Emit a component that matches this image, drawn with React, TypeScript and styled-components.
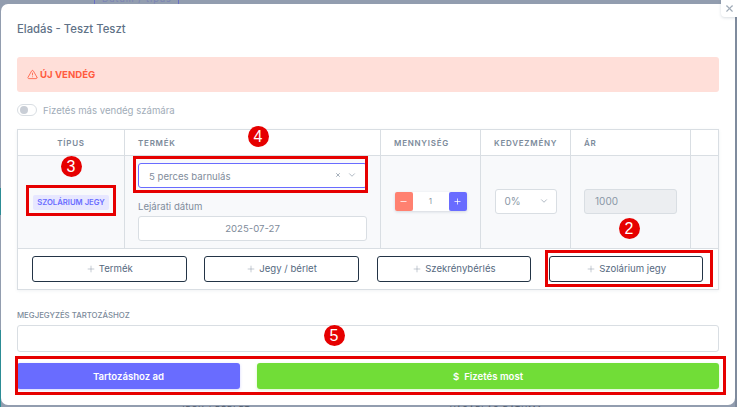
import React from "react";
import styled, { createGlobalStyle } from "styled-components";
import { ChevronDown, Minus, Plus, TriangleAlert, X } from "lucide-react";

const GlobalStyle = createGlobalStyle`
    html, body {
        margin: 0;
        padding: 0;
        height: 407px;
        overflow: hidden;
        background: #929daf;
        font-family: Inter, "Noto Sans", sans-serif;
    }
`;

const App = () => {
    return (
        <>
            <GlobalStyle/>
            <Page>
                {/* what is left visible of the page behind the dialog */}
                <BehindLine $x={94}/>
                <BehindLine $x={178}/>
                <BehindTop>Dátum / típus</BehindTop>
                <BehindTeal $y={188} $h={27}/>
                <BehindTeal $y={330} $h={77}/>
                <BehindBottom $x={180}>JEGY / BÉRLET</BehindBottom>
                <BehindBottom $x={450}>VÁSÁRLÁS DÁTUMA</BehindBottom>
                <BehindEdge/>

                <Modal>
                    <CloseBtn><X size={11} strokeWidth={2.5}/></CloseBtn>
                    <Title>Eladás - Teszt Teszt</Title>

                    <Alert>
                        <TriangleAlert size={11} strokeWidth={1.8}/>
                        ÚJ VENDÉG
                    </Alert>

                    <ToggleRow>
                        <Toggle><Knob/></Toggle>
                        Fizetés más vendég számára
                    </ToggleRow>

                    <Table>
                        <Grid>
                            <HeadCell $center>TÍPUS</HeadCell>
                            <HeadCell>TERMÉK</HeadCell>
                            <HeadCell>MENNYISÉG</HeadCell>
                            <HeadCell>KEDVEZMÉNY</HeadCell>
                            <HeadCell>ÁR</HeadCell>
                            <HeadCell/>

                            <BodyCell>
                                <Marked>
                                    <Chip>SZOLÁRIUM JEGY</Chip>
                                </Marked>
                            </BodyCell>
                            <ProductCell>
                                <SelectBox>
                                    5 perces barnulás
                                    <SelectIcons>
                                        <X size={6} strokeWidth={3}/>
                                        <ChevronDown size={10} strokeWidth={1.6}/>
                                    </SelectIcons>
                                </SelectBox>
                                <FieldLabel>Lejárati dátum</FieldLabel>
                                <DateBox>2025-07-27</DateBox>
                            </ProductCell>
                            <BodyCell>
                                <Stepper>
                                    <StepBtn $color="#ff8170"><Minus size={9} strokeWidth={2.5}/></StepBtn>
                                    <StepValue>1</StepValue>
                                    <StepBtn $color="#696cff"><Plus size={9} strokeWidth={2.5}/></StepBtn>
                                </Stepper>
                            </BodyCell>
                            <BodyCell>
                                <Percent>
                                    0%
                                    <ChevronDown size={10} strokeWidth={1.6}/>
                                </Percent>
                            </BodyCell>
                            <BodyCell>
                                <PriceBox>1000</PriceBox>
                            </BodyCell>
                            <BodyCell/>
                        </Grid>

                        <AddRow>
                            <AddBtn><Plus size={10} strokeWidth={1.2}/>Termék</AddBtn>
                            <AddBtn><Plus size={10} strokeWidth={1.2}/>Jegy / bérlet</AddBtn>
                            <AddBtn><Plus size={10} strokeWidth={1.2}/>Szekrénybérlés</AddBtn>
                            <AddBtn><Plus size={10} strokeWidth={1.2}/>Szolárium jegy</AddBtn>
                        </AddRow>
                    </Table>

                    <NoteLabel>MEGJEGYZÉS TARTOZÁSHOZ</NoteLabel>
                    <NoteInput/>

                    <Actions>
                        <DebtBtn>Tartozáshoz ad</DebtBtn>
                        <PayBtn><span>$</span>Fizetés most</PayBtn>
                    </Actions>

                    <RedFrame $x={26} $y={185} $w={90} $h={31}/>
                    <RedFrame $x={133} $y={156} $w={235} $h={37}/>
                    <RedFrame $x={545} $y={250} $w={168} $h={37}/>
                    <RedFrame $x={15} $y={356} $w={711} $h={39}/>

                    <Badge $x={71} $y={166}>3</Badge>
                    <Badge $x={258} $y={136}>4</Badge>
                    <Badge $x={629} $y={228}>2</Badge>
                    <Badge $x={334} $y={335}>5</Badge>
                </Modal>
            </Page>
        </>
    );
};

const Page = styled.main`
    width: 737px;
    height: 407px;
    padding: 4px 2px 2px 1px;
    box-sizing: border-box;
    position: relative;
    overflow: hidden;
`;

const BehindLine = styled.div<{ $x: number }>`
    position: absolute;
    left: ${p => p.$x}px;
    top: 0;
    width: 1px;
    height: 4px;
    background: #6a6fc4;
`;

const BehindTop = styled.div`
    position: absolute;
    left: 102px;
    top: -7px;
    font-size: 9px;
    line-height: 11px;
    letter-spacing: 1px;
    color: #7c84b4;
`;

const BehindTeal = styled.div<{ $y: number; $h: number }>`
    position: absolute;
    left: 0;
    top: ${p => p.$y}px;
    width: 1px;
    height: ${p => p.$h}px;
    background: #2c8c95;
`;

const BehindBottom = styled.div<{ $x: number }>`
    position: absolute;
    left: ${p => p.$x}px;
    top: 404px;
    font-size: 8px;
    line-height: 10px;
    letter-spacing: 1px;
    color: #4e5a6c;
`;

const BehindEdge = styled.div`
    position: absolute;
    right: 0;
    top: 17px;
    width: 2px;
    height: 390px;
    background: #7f8b9d;
`;

const Modal = styled.section`
    position: relative;
    z-index: 1;
    width: 734px;
    height: 401px;
    background: #fff;
    border-radius: 7px;
    padding: 17px 16px 0 16px;
    box-sizing: border-box;
    color: #697a8d;
    font-size: 10px;
`;

const CloseBtn = styled.button`
    position: absolute;
    top: -4px;
    right: -2px;
    width: 16px;
    height: 17px;
    padding: 0;
    border: 0;
    border-radius: 0 0 0 4px;
    background: #fff;
    color: #a1acb8;
    display: flex;
    align-items: center;
    justify-content: center;
    box-shadow: 0 1px 3px rgba(67, 89, 113, 0.2);
`;

const Title = styled.h5`
    margin: 0;
    height: 16px;
    font-size: 11.3px;
    line-height: 16px;
    font-weight: 500;
    color: #5f7287;
`;

const Alert = styled.div`
    margin-top: 20px;
    height: 35px;
    width: 702px;
    border-radius: 3px;
    background: #ffdfd9;
    color: #ff5b3f;
    display: flex;
    align-items: center;
    gap: 2px;
    padding-left: 10px;
    box-sizing: border-box;
    font-size: 9.6px;
    font-weight: 700;
`;

const ToggleRow = styled.label`
    margin-top: 12px;
    height: 12px;
    display: flex;
    align-items: center;
    gap: 6px;
    font-size: 9.6px;
    color: #a1acb8;
`;

const Toggle = styled.span`
    width: 20px;
    height: 12px;
    box-sizing: border-box;
    border: 1px solid #d9dee3;
    border-radius: 6px;
    background: #fff;
    display: flex;
    align-items: center;
    padding-left: 2px;
`;

const Knob = styled.span`
    width: 8px;
    height: 8px;
    border-radius: 50%;
    background: #c9ced6;
`;

const Table = styled.div`
    margin-top: 13px;
    width: 702px;
    border: 1px solid #d9dee3;
    box-sizing: border-box;
    box-shadow: 0 1px 3px rgba(67, 89, 113, 0.08);
`;

const Grid = styled.div`
    display: grid;
    grid-template-columns: 107px 256px 100px 90px 120px 1fr;
    grid-template-rows: 26px 93px;
`;

const HeadCell = styled.div<{ $center?: boolean }>`
    border-right: 1px solid #d9dee3;
    border-bottom: 1px solid #d9dee3;
    display: flex;
    align-items: center;
    justify-content: ${p => (p.$center ? "center" : "flex-start")};
    padding-left: ${p => (p.$center ? "0" : "13px")};
    font-size: 8px;
    font-weight: 600;
    letter-spacing: 0.75px;
    color: #7b8a9a;

    &:nth-child(6) {
        border-right: 0;
    }
`;

const BodyCell = styled.div`
    background: #f8f9fb;
    border-right: 1px solid #d9dee3;
    border-bottom: 1px solid #d9dee3;
    display: flex;
    align-items: center;
    justify-content: center;
    padding-bottom: 2px;

    &:last-child {
        border-right: 0;
    }
`;

const Marked = styled.div`
    margin-top: 3px;
`;

const Chip = styled.span`
    display: block;
    background: #e7e7ff;
    color: #696cff;
    border-radius: 2px;
    padding: 0 4px;
    height: 15px;
    line-height: 15px;
    font-size: 7.7px;
    font-weight: 600;
    white-space: nowrap;
`;

const ProductCell = styled.div`
    background: #f8f9fb;
    border-right: 1px solid #d9dee3;
    border-bottom: 1px solid #d9dee3;
    padding: 7px 13px 0 13px;
`;

const SelectBox = styled.div`
    height: 25px;
    box-sizing: border-box;
    border: 1px solid #696cff;
    border-radius: 3px;
    background: #fff;
    display: flex;
    align-items: center;
    justify-content: space-between;
    padding: 1px 9px 0 10px;
    font-size: 9.6px;
    color: #7f8c9b;
`;

const SelectIcons = styled.span`
    display: flex;
    align-items: center;
    gap: 6px;
    margin-top: -2px;
    color: #8a97a6;
`;

const FieldLabel = styled.div`
    margin-top: 13px;
    height: 12px;
    line-height: 12px;
    font-size: 9.6px;
    color: #7f8c9b;
`;

const DateBox = styled.div`
    margin-top: 3px;
    height: 25px;
    box-sizing: border-box;
    border: 1px solid #d9dee3;
    border-radius: 3px;
    background: #fff;
    display: flex;
    align-items: center;
    justify-content: center;
    font-size: 9.6px;
    color: #7f8c9b;
`;

const Stepper = styled.div`
    display: flex;
    height: 19px;
    border-radius: 2px;
    box-shadow: 0 1px 3px rgba(67, 89, 113, 0.2);
`;

const StepBtn = styled.span<{ $color: string }>`
    width: 18px;
    background: ${p => p.$color};
    color: rgba(255, 255, 255, 0.8);
    display: flex;
    align-items: center;
    justify-content: center;
    border-radius: 2px;
`;

const StepValue = styled.span`
    width: 36px;
    background: #fff;
    text-align: center;
    line-height: 19px;
    font-size: 8px;
    color: #8a97a6;
`;

const Percent = styled.div`
    width: 62px;
    height: 25px;
    box-sizing: border-box;
    border: 1px solid #d9dee3;
    border-radius: 3px;
    background: #fff;
    display: flex;
    align-items: center;
    justify-content: space-between;
    padding: 0 7px 0 9px;
    font-size: 10px;
    color: #8a97a6;
`;

const PriceBox = styled.div`
    width: 93px;
    height: 25px;
    box-sizing: border-box;
    border: 1px solid #d9dee3;
    border-radius: 3px;
    background: #eceef1;
    display: flex;
    align-items: center;
    padding-left: 10px;
    font-size: 10px;
    color: #8a97a6;
`;

const AddRow = styled.div`
    height: 40px;
    box-sizing: border-box;
    display: grid;
    grid-template-columns: repeat(4, 154.5px);
    column-gap: 17.8px;
    padding: 7px 0 0 14px;
`;

const AddBtn = styled.button`
    height: 26px;
    box-sizing: border-box;
    border: 1px solid #233446;
    border-radius: 3px;
    background: #fff;
    display: flex;
    align-items: center;
    justify-content: center;
    gap: 3px;
    padding: 0 0 1px;
    font-family: inherit;
    font-size: 9.6px;
    color: #566a7f;

    svg {
        color: #8a97a6;
    }
`;

const NoteLabel = styled.div`
    margin-top: 20px;
    height: 10px;
    line-height: 10px;
    font-size: 7.8px;
    font-weight: 500;
    color: #7b8a9a;
`;

const NoteInput = styled.div`
    margin-top: 5px;
    width: 702px;
    height: 27px;
    box-sizing: border-box;
    border: 1px solid #d9dee3;
    border-radius: 3px;
`;

const Actions = styled.div`
    margin-top: 11px;
    width: 702px;
    display: grid;
    grid-template-columns: 223px 1fr;
    column-gap: 17px;
`;

const DebtBtn = styled.button`
    height: 26px;
    border: 0;
    border-radius: 3px;
    background: #696cff;
    color: #fff;
    font-family: inherit;
    font-size: 9.6px;
    font-weight: 600;
    padding: 0;
    box-shadow: 0 1px 3px rgba(105, 108, 255, 0.3);
`;

const PayBtn = styled(DebtBtn)`
    background: #71dd37;
    box-shadow: 0 1px 3px rgba(113, 221, 55, 0.3);

    span {
        margin-right: 5px;
    }
`;

// $x and $y are page coordinates, the modal starts at 1,4
const RedFrame = styled.div<{ $x: number; $y: number; $w: number; $h: number }>`
    position: absolute;
    left: ${p => p.$x - 1}px;
    top: ${p => p.$y - 4}px;
    width: ${p => p.$w}px;
    height: ${p => p.$h}px;
    box-sizing: border-box;
    border: 3px solid #e60000;
    pointer-events: none;
`;

const Badge = styled.div<{ $x: number; $y: number }>`
    position: absolute;
    left: ${p => p.$x - 11.5}px;
    top: ${p => p.$y - 14}px;
    width: 21px;
    height: 21px;
    border-radius: 50%;
    background: #e60000;
    color: #fff;
    display: flex;
    align-items: center;
    justify-content: center;
    font-family: "Liberation Sans", sans-serif;
    font-size: 16px;
`;

export default App;
